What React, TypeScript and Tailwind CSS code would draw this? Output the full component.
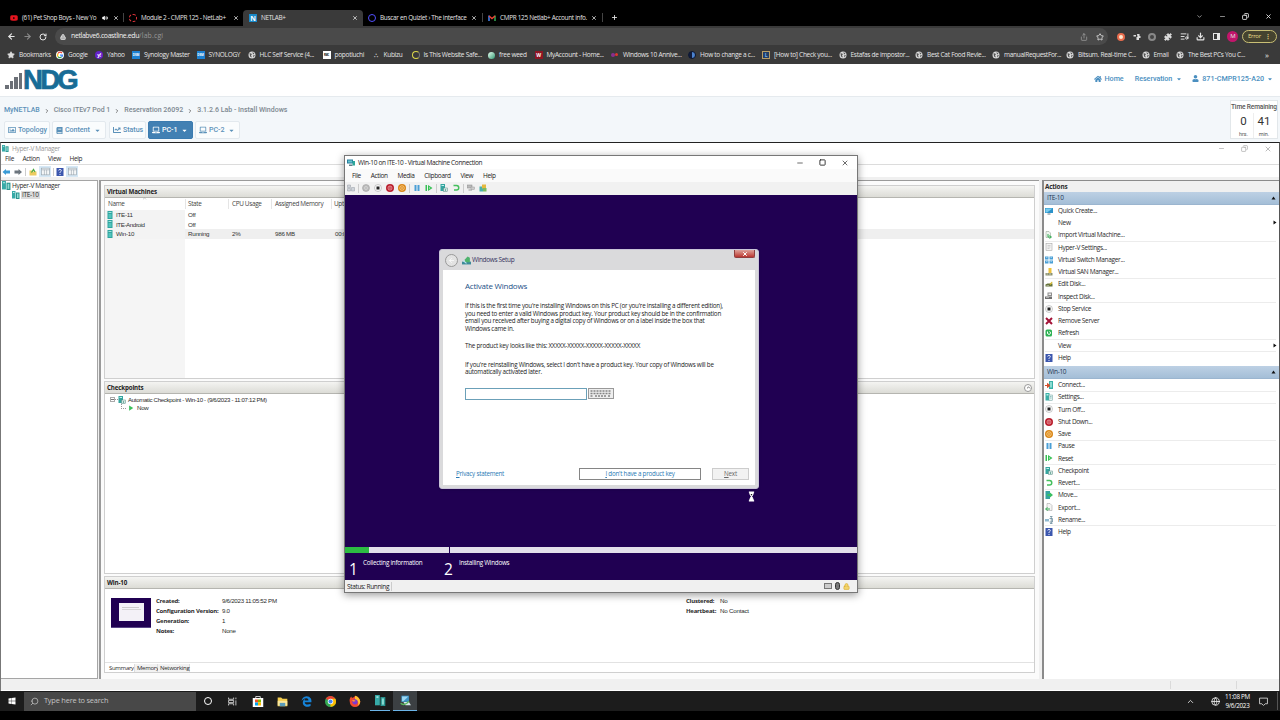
import type { ReactNode } from 'react';
import {
    ArrowLeft, ArrowRight, RotateCw, Lock, Star, Share, Puzzle, ListMusic, Download,
    ChevronDown, ChevronUp, ChevronRight, Search, Globe, Volume2, Minus, Square, X, Plus, Copy,
} from 'lucide-react';
import { FaHome, FaUser, FaCaretDown, FaBook, FaChartLine, FaLaptop, FaRegImage, FaYoutube, FaEdgeLegacy, FaWindows } from 'react-icons/fa';

const Svg = ({ children, className = 'size-2' }: { children: ReactNode; className?: string }) => (
    <svg viewBox="0 0 16 16" className={`shrink-0 ${className}`}>{children}</svg>
);

function Icon({ name, className }: { name: string; className?: string }) {
    switch (name) {
        case 'server':
            return <Svg className={className}><rect x="3" y="0" width="10" height="16" fill="#2fa5a0" /><rect x="5" y="2" width="6" height="2" fill="#a5e4df" /><rect x="5" y="6" width="6" height="8" fill="#52c4bc" /></Svg>;
        case 'servers':
            return <Svg className={className}><rect x="0" y="0" width="7" height="15" fill="#36aaa7" /><rect x="2" y="2" width="3" height="2" fill="#c3f0ec" /><rect x="8" y="3" width="7" height="13" fill="#2a9590" /><rect x="10" y="5" width="3" height="9" fill="#8adbd2" /></Svg>;
        case 'monitor':
            return <Svg className={className}><rect x="0" y="2" width="16" height="10" fill="#2b92c9" /><path d="M1 3h14L4 11H1z" fill="#79cbed" /><rect x="5" y="13" width="6" height="2" fill="#6e7d85" /></Svg>;
        case 'vmc':
            return <Svg className={className}><rect x="0" y="1" width="12" height="8" fill="#277d9d" /><rect x="2" y="3" width="8" height="4" fill="#67c4cf" /><path d="M4 11h7v3H4z" fill="#607c86" /><rect x="11" y="4" width="5" height="9" fill="#2ea79a" /></Svg>;
        case 'vmcTask':
            return <Svg className={className}><rect x="2" y="1" width="11" height="9" fill="#3f93c4" /><path d="M3 2h9L5 9H3z" fill="#9ed8f2" /><path d="M5 10h8l3 5H8z" fill="#d5e6ea" /><path d="M1 12c2 2 6 2 9 0l3-3" fill="none" stroke="#5bb85d" strokeWidth="2" /></Svg>;
        case 'import':
            return <Svg className={className}><path d="M2 1h6l3 3v9H2z" fill="#eef5ee" stroke="#8a9a8a" /><path d="M6 6v6h6M9 9l4 3-4 3" fill="none" stroke="#37ad55" strokeWidth="2" /></Svg>;
        case 'export':
            return <Svg className={className}><path d="M4 1h6l4 4v10H4z" fill="#f4f4f4" stroke="#989898" /><path d="M10 12H3M5 9l-4 3 4 3" fill="none" stroke="#37ad55" strokeWidth="2" /></Svg>;
        case 'page':
            return <Svg className={className}><rect x="2" y="1" width="12" height="14" fill="#f3f3f3" stroke="#999" /><path d="M5 5h6M5 8h6M5 11h4" stroke="#aaa" /></Svg>;
        case 'switch':
            return <Svg className={className}><path d="M0 1h7v6H0zM9 1h7v6H9zM0 9h7v6H0zM9 9h7v6H9z" fill="#4a9fd6" /><path d="M2 3h3v1H2zM11 3h3v1h-3zM2 11h3v1H2zM11 11h3v1h-3z" fill="#d8effc" /></Svg>;
        case 'san':
            return <Svg className={className}><rect x="7" y="0" width="6" height="11" fill="#efc33c" /><path d="M1 10h14v5H1z" fill="#8c9270" /><path d="M3 12h3M8 12h4" stroke="#fff" /></Svg>;
        case 'disk':
            return <Svg className={className}><path d="M1 9l4-2h10v6H1z" fill="#65733b" /><path d="M9 8l5-5 1 2-4 5z" fill="#d5b82c" /><path d="M3 11h5" stroke="#ddd" /></Svg>;
        case 'inspect':
            return <Svg className={className}><path d="M5 1h9v7H5z" fill="#8d8d8d" /><path d="M0 9h14v5H0z" fill="#707070" /><path d="M7 3h5v3H7zM2 11h6v1H2z" fill="#eee" /></Svg>;
        case 'stop':
            return <Svg className={className}><circle cx="8" cy="8" r="7" fill="#fbfbfb" stroke="#999" /><rect x="5" y="5" width="6" height="6" fill="#222" /></Svg>;
        case 'disabled':
            return <Svg className={className}><circle cx="8" cy="8" r="7" fill="#bcbcbc" stroke="#999" /><circle cx="8" cy="8" r="3" fill="none" stroke="#e5e5e5" /></Svg>;
        case 'remove':
            return <Svg className={className}><path d="M2 2l12 12M14 2L2 14" stroke="#a31237" strokeWidth="4" /></Svg>;
        case 'refresh':
            return <Svg className={className}><rect x="1" y="1" width="13" height="14" rx="3" fill="#2fb254" /><path d="M5 5v3a3 3 0 1 0 4-3" fill="none" stroke="#fff" strokeWidth="2" /></Svg>;
        case 'help':
            return <Svg className={className}><rect x="1" y="0" width="14" height="16" fill="#3c57ae" /><path d="M5.500 5a2.500 2.500 0 1 1 3.500 2.500L8 9v1M8 12v2" fill="none" stroke="#fff" strokeWidth="1.800" /></Svg>;
        case 'connect':
            return <Svg className={className}><rect x="8" y="0" width="8" height="16" fill="#39b0a7" /><rect x="10" y="2" width="4" height="11" fill="#8adbd2" /><path d="M0 9h7M5 5l5 4-5 4z" stroke="#d4512d" strokeWidth="2" fill="#d4512d" /></Svg>;
        case 'settings':
            return <Svg className={className}><rect x="1" y="0" width="8" height="15" fill="#39b0a7" /><rect x="3" y="2" width="4" height="3" fill="#b7eee8" /><rect x="8" y="4" width="7" height="11" fill="#e4f4f3" stroke="#6c9d9a" /><path d="M10 7h3M10 10h3" stroke="#44938e" /></Svg>;
        case 'shutdown':
            return <Svg className={className}><circle cx="8" cy="8" r="8" fill="#b91f2e" /><circle cx="8" cy="8" r="4" fill="none" stroke="#f3aeb0" strokeWidth="1.500" /><path d="M8 5v5" stroke="#f3c0c0" strokeWidth="1.500" /></Svg>;
        case 'save':
            return <Svg className={className}><circle cx="8" cy="8" r="8" fill="#d98518" /><circle cx="8" cy="8" r="4.500" fill="none" stroke="#ffdb95" strokeWidth="1.500" /><circle cx="8" cy="8" r="1.500" fill="#ffe4ac" /></Svg>;
        case 'pause':
            return <Svg className={className}><path d="M3 2h4v12H3zM9 2h4v12H9z" fill="#4a9fd6" /></Svg>;
        case 'reset':
            return <Svg className={className}><path d="M1 2h3v12H1zM6 2l9 6-9 6z" fill="#38bf55" /><path d="M8 6l3 2-3 2z" fill="#b5f0bd" /></Svg>;
        case 'checkpoint':
            return <Svg className={className}><rect x="1" y="0" width="9" height="14" fill="#35a59f" /><rect x="3" y="2" width="5" height="2" fill="#c3f0ec" /><rect x="7" y="8" width="8" height="7" fill="#dff1ed" stroke="#52857e" /><circle cx="11" cy="12" r="1.500" fill="#3d8a76" /></Svg>;
        case 'revert':
            return <Svg className={className}><path d="M3 3h6a4 4 0 0 1 0 9H4" fill="none" stroke="#45bf5d" strokeWidth="3" /></Svg>;
        case 'move':
            return <Svg className={className}><rect x="1" y="0" width="9" height="16" fill="#35a59f" /><path d="M5 6h5V3l6 5-6 5v-3H5z" fill="#38bf62" /></Svg>;
        case 'rename':
            return <Svg className={className}><path d="M0 6h8v5H0z" fill="#8fb9cf" /><path d="M10 1h5M12.500 1v14M10 15h5M9 5h6v7H9" fill="none" stroke="#668899" strokeWidth="1.500" /></Svg>;
        case 'folderup':
            return <Svg className={className}><path d="M1 5h5l2 2h7v8H1z" fill="#edcb60" /><path d="M5 9l4-6 3 5" fill="none" stroke="#49a944" strokeWidth="2.500" /></Svg>;
        case 'pane':
            return <Svg className={className}><rect x="1" y="2" width="14" height="12" fill="#f5f7f8" stroke="#8e9ba5" /><path d="M1 5h14M6 5v9M10 5v9" stroke="#8e9ba5" /></Svg>;
        case 'cad':
            return <Svg className={className}><path d="M1 2h6v5H1zM1 9h6v5H1zM9 7h6v7H9z" fill="#cfd4da" stroke="#969da5" /></Svg>;
        case 'enhanced':
            return <Svg className={className}><rect x="1" y="2" width="9" height="6" fill="#bbb" stroke="#888" /><rect x="8" y="6" width="7" height="5" fill="#ccc" stroke="#999" /><path d="M3 12h7" stroke="#999" strokeWidth="2" /></Svg>;
        case 'share':
            return <Svg className={className}><rect x="1" y="5" width="7" height="10" fill="#4ab0aa" /><rect x="6" y="1" width="8" height="8" fill="#e4b83f" /><rect x="8" y="8" width="7" height="7" fill="#7bba62" /></Svg>;
        case 'play':
            return <Svg className={className}><path d="M3 1l11 7-11 7z" fill="#3cc15c" /></Svg>;
        case 'setup':
            return <Svg className={className}><path d="M0 10h16v5H0z" fill="#3c8a9a" /><path d="M5 11V6l5-5 4 2v8z" fill="#4fb36d" /><path d="M2 8l6 5" stroke="#bbe3ee" strokeWidth="2" /></Svg>;
        case 'chrome':
            return (
                <Svg className={className}>
                    <circle cx="8" cy="8" r="8" fill="#34a853" />
                    <path d="M8 8L1 4a8 8 0 0 1 14 0z" fill="#ea4335" />
                    <path d="M8 8V4h7a8 8 0 0 1-7 12z" fill="#fbbc05" />
                    <circle cx="8" cy="8" r="4" fill="#fff" /><circle cx="8" cy="8" r="3" fill="#4285f4" />
                </Svg>
            );
        case 'firefox':
            return (
                <Svg className={className}>
                    <path d="M1 9C0 6 2 3 3 2l1 2c2-1 3-1 4-3 4 1 7 4 7 8a7 7 0 0 1-14 0z" fill="#f2492f" />
                    <path d="M8 1c4 1 7 4 7 8a7 7 0 0 1-4 6c3-4 1-8-3-9z" fill="#ffc02e" />
                    <circle cx="8" cy="9" r="3.500" fill="#7a3ad0" /><path d="M4 7c2-1 4 0 5 1L6 9z" fill="#ff9130" />
                </Svg>
            );
        case 'google':
            return (
                <Svg className={className}>
                    <circle cx="8" cy="8" r="8" fill="#fff" />
                    <g fill="none" strokeWidth="2.500"><path d="M4 5a5 5 0 0 1 8-1" stroke="#ea4335" /><path d="M4 5a5 5 0 0 0 0 6" stroke="#fbbc05" /><path d="M4 11a5 5 0 0 0 7 1" stroke="#34a853" /><path d="M8 8h5a5 5 0 0 1-2 4" stroke="#4285f4" /></g>
                </Svg>
            );
        case 'world':
            return <Svg className={className}><circle cx="8" cy="8" r="7" fill="#dadada" /><path d="M3 4l5 2-2 3 2 4-4-2zM9 2l4 3-3 2zM10 9l4-1-3 5z" fill="#555" /></Svg>;
        default:
            return <Svg className={className}>{null}</Svg>;
    }
}

const Letter = ({ children, className }: { children?: ReactNode; className: string }) => (
    <span className={`flex size-2 shrink-0 items-center justify-center leading-none font-bold ${className}`}>{children}</span>
);

type Bookmark = { icon: ReactNode; label: string; width: number };

const world = <Icon name="world" className="size-2" />;
const dsm = <Letter className="bg-[#1d81d2] text-[3px] tracking-[-0.1px] text-white">DSM</Letter>;

const bookmarks: Bookmark[] = [
    { icon: <Star className="size-2 shrink-0 fill-[#ddd] stroke-[#ddd]" />, label: 'Bookmarks', width: 49 },
    { icon: <Icon name="google" />, label: 'Google', width: 39 },
    { icon: <Letter className="rounded-sm bg-[#6420c8] text-[5px] text-white">y!</Letter>, label: 'Yahoo', width: 37 },
    { icon: dsm, label: 'Synology Master', width: 64.5 },
    { icon: dsm, label: 'SYNOLOGY', width: 51 },
    { icon: world, label: 'HLC Self Service (4...', width: 75 },
    { icon: <Letter className="bg-white text-[2.500px] text-black">RMC</Letter>, label: 'popotluchi', width: 49 },
    { icon: <Letter className="text-[6px] text-[#bbb]">⛬</Letter>, label: 'Kubizu', width: 40 },
    { icon: <span className="size-2 shrink-0 rounded-full border-[1.500px] border-[#dcd84a] border-r-[#777]" />, label: 'Is This Website Safe...', width: 76.5 },
    { icon: <span className="size-[7px] shrink-0 rounded-full bg-linear-to-br from-[#e6fff2] to-[#1f9a75]" />, label: 'free weed', width: 46.5 },
    { icon: <Letter className="bg-[#8f1523] text-[5px] text-white">W</Letter>, label: 'MyAccount - Home...', width: 76.5 },
    { icon: <span className="flex w-2 shrink-0"><i className="size-1 rounded-full bg-[#8b2f8e]" /><i className="size-[3px] rounded-full bg-[#e0352e]" /></span>, label: 'Windows 10 Annive...', width: 77 },
    { icon: <span className="size-2 shrink-0 rounded-full border border-[#0c1734] bg-linear-to-r from-[#111c3c] from-50% to-[#4c83cf] to-50%" />, label: 'How to change a c...', width: 74 },
    { icon: <Letter className="border border-[#b99e66] bg-[#213e66] text-[5px] text-[#7fb4ea]">L</Letter>, label: '[How to] Check you...', width: 76.5 },
    { icon: world, label: 'Estafas de impostor...', width: 76.5 },
    { icon: world, label: 'Best Cat Food Revie...', width: 77 },
    { icon: world, label: 'manualRequestFor...', width: 74 },
    { icon: world, label: 'Bitsum. Real-time C...', width: 75.5 },
    { icon: world, label: 'Email', width: 34.5 },
    { icon: world, label: 'The Best PCs You C...', width: 89 },
];

function BrowserTab({ icon, label, className = '', labelClass = '', sound = false }: { icon: ReactNode; label: string; className?: string; labelClass?: string; sound?: boolean }) {
    return (
        <div className={`flex h-4 items-center text-[6.400px] text-[#e4e4e4] ${className}`}>
            {icon}
            <span className={`ml-1 ${labelClass}`}>{label}</span>
            {sound && <Volume2 className="ml-auto size-1.5 shrink-0 fill-white stroke-white" />}
            <X className={`${sound ? 'ml-[5px]' : 'ml-auto'} size-[6px] shrink-0`} strokeWidth={3} />
        </div>
    );
}

const BrowserChrome = () => (
    <header className="text-[6.500px] text-[#e6e6e6]">
        <div className="flex h-[26px] items-end bg-black">
            <BrowserTab className="w-[119px] pl-[10px]" labelClass="tracking-[-0.32px]" icon={<FaYoutube className="size-2 shrink-0 text-[#e6151f]" />} label="(61) Pet Shop Boys - New Yo" sound />
            <span className="mb-[4px] ml-[4px] h-[9px] w-px bg-[#444]" />
            <BrowserTab className="w-[115px] pl-[5px]" labelClass="tracking-[-0.32px]" icon={<span className="size-2 shrink-0 rounded-full border border-dashed border-[#e6343b]" />} label="Module 2 - CMPR 125 - NetLab+" />
            <BrowserTab className="ml-[4px] w-[120px] rounded-t bg-[#3a3a3a] pr-[5px] pl-[6px]" icon={<Letter className="bg-[#1989c8] text-[7px] text-white">N</Letter>} label="NETLAB+" labelClass="tracking-[-0.35px]" />
            <BrowserTab className="w-[114px] pl-[5px]" labelClass="tracking-[-0.3px]" icon={<span className="size-2 shrink-0 rounded-full border-[1.500px] border-[#5250ff]" />} label="Buscar en Quizlet › The interface" />
            <span className="mb-[4px] ml-[5px] h-[9px] w-px bg-[#444]" />
            <BrowserTab
                className="w-[114px] pl-[5px]"
                labelClass="tracking-[-0.300px]"
                icon={<Svg><path d="M2 14V3" stroke="#4285f4" strokeWidth="3" /><path d="M14 14V3" stroke="#34a853" strokeWidth="3" /><path d="M2 4l6 5 6-5" fill="none" stroke="#ea4335" strokeWidth="3" /></Svg>}
                label="CMPR 125 Netlab+ Account info."
            />
            <span className="mb-[4px] ml-[5px] h-[9px] w-px bg-[#444]" />
            <Plus className="mb-[5px] ml-[8px] size-[7px]" strokeWidth={3} />
            <div className="mb-[6px] ml-auto flex items-center gap-[16px] pr-[8px]">
                <ChevronDown className="size-[7px]" />
                <Minus className="size-[7px]" />
                <Copy className="size-[7px] -scale-x-100" strokeWidth={3} />
                <X className="size-[7px]" strokeWidth={3} />
            </div>
        </div>
        <div className="flex h-[20px] items-center bg-[#3a3a3a] pt-px pl-[7px]">
            <ArrowLeft className="size-[9px]" strokeWidth={3} />
            <ArrowRight className="ml-[7px] size-[9px] text-[#888]" strokeWidth={3} />
            <RotateCw className="ml-[7px] size-[8px]" strokeWidth={3} />
            <div className="ml-[8px] flex h-[17px] w-[1053px] items-center rounded-full bg-[#4a4a4a] pr-[4px] pl-[5px]">
                <Lock className="size-[6px] fill-[#aaa]" strokeWidth={3} />
                <span className="ml-[5px] text-[6.900px] tracking-[-0.35px] text-[#f2f2f2]">netlabve6.coastline.edu<span className="tracking-[0.15px] text-[#999]">/lab.cgi</span></span>
                <Share className="ml-auto size-[8px] text-[#aaa]" />
                <Star className="ml-[8px] size-[8px]" strokeWidth={2.5} />
            </div>
            <div className="flex flex-1 items-center justify-end gap-[7.600px] pr-[3px]">
                <span className="size-2 rounded-full border-2 border-[#e86c4d] bg-[#ffe9d0]" />
                <Svg><path d="M1 4h5v3H1zM8 2h5v4h2v4h-3v4H7V8h2z" fill="#ddd" /></Svg>
                <span className="size-2 rounded-full border-2 border-double border-[#888] bg-[#444]" />
                <Puzzle className="size-[8px] fill-[#ddd]" />
                <ListMusic className="size-[9px]" strokeWidth={2.5} />
                <Download className="size-[9px]" strokeWidth={3} />
                <span className="size-[7px] border border-r-[3px] border-[#e6e6e6]" />
                <span className="flex size-[11px] items-center justify-center rounded-full bg-[#c2156b] text-[6px]">M</span>
                <span className="-ml-1 flex h-[13px] w-[35px] items-center justify-between rounded-full border border-[#c9bf75] bg-[#45432f] px-[5px] text-[6px] tracking-[-0.3px] text-[#e8dd8a]">Error<b>⋮</b></span>
            </div>
        </div>
        <div className="flex h-[18px] items-center bg-[#3a3a3a] pl-[7px]">
            {bookmarks.map((b) => (
                <div key={b.label} className="flex shrink-0 items-center gap-1 tracking-[-0.28px]" style={{ width: b.width }}>
                    {b.icon}
                    <span>{b.label}</span>
                </div>
            ))}
            <span className="text-[8px]">»</span>
        </div>
    </header>
);

const PageButton = ({ icon, label, caret = false, active = false, className = '' }: { icon: ReactNode; label: string; caret?: boolean; active?: boolean; className?: string }) => (
    <div className={`flex h-[18px] items-center rounded-xs border pl-[3px] text-[7.100px] font-medium tracking-[-0.05px] [&>svg]:shrink-0 ${active ? 'border-[#3b7bb0] bg-[#4280b3] text-white' : 'border-[#e3e9ee] bg-[#fafcfd] text-[#5b91b9]'} ${className}`}>
        {icon}
        <span className="ml-[2px]">{label}</span>
        {caret && <FaCaretDown className="mr-[4px] ml-auto size-[7px]" />}
    </div>
);

const crumb = <ChevronRight className="mx-[4px] size-[6px] text-[#555]" strokeWidth={3} />;

const LabHeader = () => (
    <section className="font-[Roboto,sans-serif]">
        <div className="flex h-[32px] items-center bg-white pr-[7px] pl-[5px]">
            <div className="mb-[1.500px] flex items-end gap-[1px]">
                <i className="h-[4px] w-[3.500px] bg-[#6c7077]" />
                <i className="h-[8px] w-[3.500px] bg-[#6c7077]" />
                <i className="h-[12px] w-[3.500px] bg-[#6c7077]" />
                <i className="h-[16px] w-[3.500px] bg-[#6c7077]" />
                <b className="h-[20px] w-[55px] font-['Liberation_Sans',sans-serif] text-[27.500px] leading-[21px] tracking-[-2.700px] text-[#186c96] [-webkit-text-stroke:0.7px_#186c96]">NDG</b>
            </div>
            <nav className="mb-[2px] ml-auto flex items-center text-[7.200px] font-medium tracking-[-0.05px] text-[#4b8fc0]">
                <FaHome className="mr-[3px] size-[8px]" />Home
                <span className="ml-[11px]">Reservation</span><FaCaretDown className="ml-[4px] size-[6px]" />
                <FaUser className="mr-[3px] ml-[10px] size-[7px]" />871-CMPR125-A20<FaCaretDown className="ml-[3px] size-[6px]" />
            </nav>
        </div>
        <div className="flex h-[46px] justify-between border-t border-[#e5eaee] bg-[#f3f7fa]">
            <div>
                <div className="mt-[8px] flex h-[11px] items-center pl-[4px] text-[7px] font-medium text-[#7d8891]">
                    <span className="text-[#5b91b9]">MyNETLAB</span>{crumb}
                    <span>Cisco ITEv7 Pod 1</span>{crumb}
                    <span>Reservation 26092</span>{crumb}
                    <span>3.1.2.6 Lab - Install Windows</span>
                </div>
                <div className="mt-[5px] flex pl-[4px]">
                    <PageButton className="w-[46px]" icon={<FaRegImage className="size-[8px]" />} label="Topology" />
                    <PageButton className="ml-[2px] w-[54px]" icon={<FaBook className="size-[7px]" />} label="Content" caret />
                    <PageButton className="ml-[3px] w-[37px]" icon={<FaChartLine className="size-[8px]" />} label="Status" />
                    <PageButton className="ml-[2px] w-[45px]" icon={<FaLaptop className="size-[8px]" />} label="PC-1" caret active />
                    <PageButton className="ml-[2px] w-[45px]" icon={<FaLaptop className="size-[8px]" />} label="PC-2" caret />
                </div>
            </div>
            <div className="mt-[3px] mr-[2px] h-[39px] w-[48px] border border-[#e2e7ea] bg-white text-[#555]">
                <div className="h-[12px] text-[6.600px] leading-[12px] font-medium tracking-[-0.15px]">Time Remaining</div>
                <div className="flex text-center">
                    <div className="w-[23px] border-r border-[#eee] pl-[3px]"><div className="text-[11.500px] leading-[17px] text-[#333]">0</div><div className="text-[5.500px] leading-[8px]">hrs.</div></div>
                    <div className="w-[20px]"><div className="text-[11.500px] leading-[17px] text-[#333]">41</div><div className="text-[5.500px] leading-[8px]">min.</div></div>
                </div>
            </div>
        </div>
    </section>
);

const PanelTitle = ({ children }: { children: ReactNode }) => (
    <div className="flex h-[12px] shrink-0 items-center justify-between border-b border-[#b5b5b0] bg-linear-to-b from-[#f4f4f2] to-[#dcdcd6] px-[2px] text-[6.200px] font-bold tracking-[-0.15px] text-[#222]">{children}</div>
);

const machines = [
    { name: 'ITE-11', state: 'Off', cpu: '', memory: '', uptime: '' },
    { name: 'ITE-Android', state: 'Off', cpu: '', memory: '', uptime: '' },
    { name: 'Win-10', state: 'Running', cpu: '2%', memory: '986 MB', uptime: '00:01' },
];

const details = [
    ['Created:', '9/6/2023 11:05:52 PM'],
    ['Configuration Version:', '9.0'],
    ['Generation:', '1'],
    ['Notes:', 'None'],
];

type Action = { icon: string; label: string; line?: boolean; more?: boolean };

const hostActions: Action[] = [
    { icon: 'monitor', label: 'Quick Create...' },
    { icon: '', label: 'New', more: true },
    { icon: 'import', label: 'Import Virtual Machine...', line: true },
    { icon: 'page', label: 'Hyper-V Settings...' },
    { icon: 'switch', label: 'Virtual Switch Manager...' },
    { icon: 'san', label: 'Virtual SAN Manager...', line: true },
    { icon: 'disk', label: 'Edit Disk...' },
    { icon: 'inspect', label: 'Inspect Disk...', line: true },
    { icon: 'stop', label: 'Stop Service' },
    { icon: 'remove', label: 'Remove Server' },
    { icon: 'refresh', label: 'Refresh', line: true },
    { icon: '', label: 'View', more: true, line: true },
    { icon: 'help', label: 'Help' },
];

const vmActions: Action[] = [
    { icon: 'connect', label: 'Connect...', line: true },
    { icon: 'settings', label: 'Settings...', line: true },
    { icon: 'stop', label: 'Turn Off...' },
    { icon: 'shutdown', label: 'Shut Down...' },
    { icon: 'save', label: 'Save', line: true },
    { icon: 'pause', label: 'Pause' },
    { icon: 'reset', label: 'Reset', line: true },
    { icon: 'checkpoint', label: 'Checkpoint' },
    { icon: 'revert', label: 'Revert...', line: true },
    { icon: 'move', label: 'Move...' },
    { icon: 'export', label: 'Export...' },
    { icon: 'rename', label: 'Rename...', line: true },
    { icon: 'help', label: 'Help' },
];

function ActionGroup({ title, actions }: { title: string; actions: Action[] }) {
    return (
        <div>
            <div className="flex h-[13px] items-center justify-between border-b border-[#9bb5cf] bg-linear-to-b from-[#bdd0e4] to-[#a4bed7] px-[3px] text-[#1f3652]">
                {title}
                <Svg className="h-[4px] w-[5px]"><path d="M0 14L8 2l8 12z" fill="#111" /></Svg>
            </div>
            {actions.map((a) => (
                <div key={a.label} className={`mr-[3px] ml-[1px] flex h-[12.250px] items-center border-b ${a.line ? 'border-[#ececec]' : 'border-transparent'}`}>
                    <Icon name={a.icon} className="size-2" />
                    <span className="ml-[5px]">{a.label}</span>
                    {a.more && <Svg className="-mr-px ml-auto h-[5px] w-[4px]"><path d="M2 0l12 8-12 8z" fill="#111" /></Svg>}
                </div>
            ))}
        </div>
    );
}

const Center = () => (
    <div className="flex w-[940px] flex-col border-t border-l-2 border-[#9a9a9a] bg-[#fbfbfb] pt-[4px] pr-[4px] pl-[3px]">
        <div className="h-[194px] border border-[#cfcfcf] bg-white">
            <PanelTitle>Virtual Machines</PanelTitle>
            <div className="flex h-[12px] items-center pl-[3px] text-[6.400px] text-[#444]">
                <span className="relative w-[77px]">Name<ChevronUp className="absolute -top-[3px] left-[34px] size-[5px] text-[#888]" /></span>
                <span className="w-[43px] border-l border-[#e5e5e5] pl-[2px]">State</span>
                <span className="w-[43px] border-l border-[#e5e5e5] pl-[3px]">CPU Usage</span>
                <span className="w-[60px] border-l border-[#e5e5e5] pl-[3px]">Assigned Memory</span>
                <span className="border-l border-[#e5e5e5] pl-[2px]">Uptime</span>
            </div>
            {machines.map((m) => (
                <div key={m.name} className={`flex h-[9.600px] items-center font-['Liberation_Sans',sans-serif] text-[6.200px] tracking-[-0.25px] text-[#333] ${m.name === 'Win-10' ? 'bg-[#efefef]' : ''}`}>
                    <span className="flex h-full w-[80px] items-center bg-[#f3f3f3]"><Icon name="server" className="ml-px size-[8px]" /><span className={m.name === 'ITE-Android' ? 'ml-[2px] tracking-[-0.4px]' : 'ml-[2px]'}>{m.name}</span></span>
                    <span className="w-[44px] pl-[3px]">{m.state}</span>
                    <span className="w-[43px] pl-[3px]">{m.cpu}</span>
                    <span className="w-[60px] pl-[3px]">{m.memory}</span>
                    <span className="pl-[3px]">{m.uptime}</span>
                </div>
            ))}
            <div className="h-[139px] w-[80px] bg-[#f5f5f5]" />
        </div>
        <div className="mt-[2px] h-[193px] border border-[#cfcfcf] bg-white">
            <PanelTitle>Checkpoints<span className="flex size-[8px] items-center justify-center rounded-full border border-[#999] bg-white"><ChevronUp className="size-[5px]" strokeWidth={3} /></span></PanelTitle>
            <div className="mt-[1px] flex h-[9px] items-center pl-[5px] font-['Liberation_Sans',sans-serif] text-[6.100px] tracking-[-0.320px]">
                <span className="flex size-[5px] items-center justify-center border border-[#aaa]"><i className="h-px w-[3px] bg-[#777]" /></span>
                <i className="w-[3px] border-b border-dotted border-[#999]" />
                <Icon name="checkpoint" className="size-[8px]" />
                <span className="ml-[2px]">Automatic Checkpoint - Win-10 - (9/6/2023 - 11:07:12 PM)</span>
            </div>
            <div className="flex h-[8px] items-center pl-[16px] font-['Liberation_Sans',sans-serif] text-[6.200px]">
                <i className="mb-[3px] h-[5px] w-[5px] border-b border-l border-dotted border-[#999]" />
                <Icon name="play" className="ml-[2px] size-[6px]" />
                <span className="ml-[3px]">Now</span>
            </div>
        </div>
        <div className="mt-[2px] flex h-[97px] flex-col border border-[#cfcfcf] bg-white">
            <PanelTitle>Win-10</PanelTitle>
            <div className="flex flex-1 pt-[7px] pl-[6px] text-[6.200px] leading-[10px]">
                <div className="mt-[2px] flex h-[30px] w-[40px] flex-col items-center border-b border-[#5a4687] bg-[#200052] pt-[5px]">
                    <div className="h-[18px] w-[25px] bg-[#f3f1f7] pt-[4px] pl-[3px]"><i className="block h-px w-[17px] bg-[#ccc]" /><i className="mt-px block h-px w-[19px] bg-[#d5d5d5]" /></div>
                </div>
                <div className="ml-[5px] w-[530px]">
                    {details.map(([label, value]) => (
                        <div key={label} className="flex h-[10.100px]">
                            <b className="w-[66px] text-[6px] tracking-[-0.22px]">{label}</b>
                            <span className="font-['Liberation_Sans',sans-serif] tracking-[-0.28px]">{value}</span>
                        </div>
                    ))}
                </div>
                <div className="tracking-[-0.22px]">
                    <div className="flex"><b className="w-[34px] text-[6px]">Clustered:</b><span className="font-['Liberation_Sans',sans-serif]">No</span></div>
                    <div className="flex"><b className="w-[34px] text-[6px]">Heartbeat:</b><span className="font-['Liberation_Sans',sans-serif]">No Contact</span></div>
                </div>
            </div>
            <div className="flex h-[10px] items-center border-t border-[#e2e2e2] text-[6px] tracking-[-0.3px]">
                <span className="w-[29px] pt-px pl-[4px] leading-[9px]">Summary</span>
                <span className="h-[8px] w-[24px] border-x border-[#ddd] bg-[#f2f2f2] pl-[2px] leading-[8px]">Memory</span>
                <span className="h-[8px] w-[32px] border-r border-[#ddd] bg-[#f2f2f2] pl-[2px] leading-[8px]">Networking</span>
            </div>
        </div>
    </div>
);

const HyperVManager = () => (
    <main className="flex h-[549px] flex-col border-t-[1.500px] border-r border-l border-t-[#222] border-r-[#555] border-l-[#777] bg-white text-[6.500px] tracking-[-0.33px] text-[#2b2b2b]">
        <div className="flex h-[10px] items-center pt-px pl-[1px] text-[6.500px] text-[#999]">
            <Icon name="servers" className="mr-[3px] size-[7px]" />Hyper-V Manager
            <div className="ml-auto flex items-center gap-[16px] pr-[7px] text-[#999]">
                <Minus className="size-[7px]" /><Copy className="size-[7px] -scale-x-100" /><X className="size-[8px]" />
            </div>
        </div>
        <div className="flex h-[12px] items-center gap-[8.500px] border-b border-[#dcdcdc] pt-px pl-[4px]"><span>File</span><span>Action</span><span>View</span><span>Help</span></div>
        <div className="flex h-[12px] items-center pt-px pl-[1px]">
            <Svg className="h-[8px] w-[9px]"><path d="M0 8l7-6v3h8v6H7v3z" fill="#3a9bd6" /></Svg>
            <Svg className="ml-[3px] h-[8px] w-[8px]"><path d="M16 8L9 2v3H1v6h8v3z" fill="#6c757d" /></Svg>
            <i className="mx-[3px] h-[8px] w-px bg-[#ccc]" />
            <Icon name="folderup" className="size-[8px]" />
            <span className="mx-[2px] flex h-[11px] w-[12px] items-center justify-center bg-[#d6e8f5]"><Icon name="pane" className="size-[9px]" /></span>
            <i className="mr-[2px] h-[8px] w-px bg-[#ccc]" />
            <Icon name="help" className="size-[8px]" />
            <span className="ml-[2px] flex h-[11px] w-[12px] items-center justify-center bg-[#d6e8f5]"><Icon name="pane" className="size-[9px]" /></span>
        </div>
        <div className="flex flex-1 bg-[#f0f0f0] pt-[3px]">
            <div className="w-[97px] border-t border-r border-b border-[#a5a5a5] bg-white pl-[1px]">
                <div className="flex h-[9px] items-center"><Icon name="servers" className="mr-[1px] size-[9px]" />Hyper-V Manager</div>
                <div className="flex h-[9px] items-center pl-[10px]"><Icon name="servers" className="size-[8px]" /><span className="ml-px bg-[#dcdcdc] px-px leading-[8px]">ITE-10</span></div>
            </div>
            <div className="w-[1px]" />
            <Center />
            <div className="w-[3px]" />
            <div className="flex-1 border-t border-l-2 border-[#8b8b8b] bg-white">
                <div className="h-[11px] bg-[#f0f0f0] pl-[1px] text-[6.400px] leading-[11px] font-bold tracking-[-0.2px]">Actions</div>
                <ActionGroup title="ITE-10" actions={hostActions} />
                <div className="h-[2px]" />
                <ActionGroup title="Win-10" actions={vmActions} />
            </div>
        </div>
        <div className="flex h-[12.500px] justify-end border-b border-white bg-[#f0f0f0]"><i className="mt-[2px] h-[8px] w-[67px] border-x border-[#dadada]" /><i className="w-[42px]" /></div>
    </main>
);

const ProductKeyDialog = () => (
    <div className="absolute top-[93px] left-[94px] h-[240px] w-[320px] rounded-[3px] border border-[#c9c4d8] bg-[#dadadc] px-[3px] text-[6.250px] tracking-[-0.230px] text-[#222] shadow">
        <div className="flex h-[20px] items-center pl-[2px]">
            <span className="flex size-[13px] items-center justify-center rounded-full border border-[#999] bg-[#e2e2e2]"><ArrowLeft className="size-[7px] text-[#f8f8f8]" strokeWidth={3} /></span>
            <Icon name="setup" className="ml-[4px] size-[9px]" />
            <span className="ml-[1px] text-[6.500px] tracking-[-0.35px] text-[#35355c]">Windows Setup</span>
            <span className="mb-auto ml-auto flex h-[8px] w-[21px] items-center justify-center rounded-b-xs border border-t-0 border-[#8f3f3f] bg-linear-to-b from-[#dda19b] to-[#b93330]"><X className="size-[6px] text-white" strokeWidth={4} /></span>
        </div>
        <div className="flex h-[215px] flex-col bg-white pb-[5px] pl-px leading-[7.500px]">
            <h1 className="mt-[10px] ml-[21px] text-[8px] leading-[11px] text-[#245087]">Activate Windows</h1>
            <p className="mt-[11px] ml-[21px]">
                If this is the first time you're installing Windows on this PC (or you're installing a different edition),<br />
                you need to enter a valid Windows product key. Your product key should be in the confirmation<br />
                email you received after buying a digital copy of Windows or on a label inside the box that<br />
                Windows came in.
            </p>
            <p className="mt-[10px] ml-[21px]">The product key looks like this: XXXXX-XXXXX-XXXXX-XXXXX-XXXXX</p>
            <p className="mt-[11px] ml-[21px]">
                If you're reinstalling Windows, select I don't have a product key. Your copy of Windows will be<br />
                automatically activated later.
            </p>
            <div className="mt-[12px] ml-[21px] flex items-center">
                <span className="h-[12px] w-[122px] border border-[#6ba0b8]" />
                <svg viewBox="0 0 26 11" className="ml-[1px] h-[11px] w-[26px]">
                    <rect x="0.500" y="0.500" width="25" height="10" fill="#eee" stroke="#999" />
                    <path d="M2.500 3h21M2.500 5.500h21M2.500 8h3M7 8h12M20 8h3" stroke="#858585" strokeWidth="1.500" strokeDasharray="2 1" />
                </svg>
            </div>
            <div className="mt-auto flex h-[13px] items-center pr-[6px] pl-[12px]">
                <span className="text-[#2878b4]"><u>P</u>rivacy statement</span>
                <span className="ml-auto flex h-[12px] w-[122px] items-center justify-center border border-[#858585] text-[#2878b4]"><span><u>I</u> don't have a product key</span></span>
                <span className="ml-[11px] flex h-[12px] w-[37px] items-center justify-center border border-[#ccc] bg-[#f2f2f2] text-[#666]"><span><u>N</u>ext</span></span>
            </div>
        </div>
    </div>
);

const VmConnection = () => (
    <div className="absolute top-[155px] left-[344px] flex h-[438px] w-[514px] flex-col border border-[#777] bg-white text-[6.500px] tracking-[-0.350px] text-[#222] shadow-[0_2px_8px_rgba(0,0,0,0.4)]">
        <div className="flex h-[13px] items-center pl-[2px] text-[6.500px]">
            <Icon name="vmc" className="mr-[3px] size-[8px]" />Win-10 on ITE-10 - Virtual Machine Connection
            <div className="ml-auto flex items-center gap-[15px] pr-[8px]"><Minus className="size-[8px]" /><Square className="size-[7px]" strokeWidth={3} /><X className="size-[8px]" /></div>
        </div>
        <div className="flex h-[13px] items-center gap-[9.800px] bg-[#fafafa] pl-[7px]"><span>File</span><span>Action</span><span>Media</span><span>Clipboard</span><span>View</span><span>Help</span></div>
        <div className="flex h-[13px] items-center bg-[#f1f1f1] pb-px pl-[2px]">
            <Icon name="cad" className="size-[8px]" />
            <i className="mr-[3px] ml-[3px] h-[9px] w-px bg-[#ccc]" />
            <Icon name="disabled" className="size-[8px]" />
            <Icon name="stop" className="ml-[4px] size-[8px]" />
            <Icon name="shutdown" className="ml-[4px] size-[8px]" />
            <Icon name="save" className="ml-[4px] size-[8px]" />
            <i className="mx-[3px] h-[9px] w-px bg-[#ccc]" />
            <Icon name="pause" className="size-[8px]" />
            <Icon name="reset" className="ml-[4px] size-[8px]" />
            <i className="mx-[3px] h-[9px] w-px bg-[#ccc]" />
            <Icon name="checkpoint" className="size-[8px]" />
            <Icon name="revert" className="ml-[4px] size-[8px]" />
            <i className="mx-[3px] h-[9px] w-px bg-[#ccc]" />
            <Icon name="enhanced" className="size-[8px]" />
            <Icon name="share" className="ml-[4px] size-[8px]" />
        </div>
        <div className="flex flex-1 flex-col justify-end bg-[#200052] text-white">
            <div className="flex h-[6px] bg-[#e3dfea]"><i className="w-[24px] bg-[#2dbb43]" /><i className="ml-[80px] w-[1px] bg-[#200052]" /></div>
            <div className="flex h-[27px] pt-[5px] pl-[4px] text-[6.300px] leading-[9px] tracking-[-0.25px]">
                <span className="w-[14px] pt-[2px] text-[15.500px] leading-[18px]">1</span><span className="w-[81px]">Collecting information</span>
                <span className="w-[15px] pt-[2px] text-[15.500px] leading-[18px]">2</span><span>Installing Windows</span>
            </div>
        </div>
        <div className="flex h-[12px] items-center bg-[#f0f0f0] pl-[2px]">
            <span className="border-r border-[#ccc] pr-[2px] leading-[9px]">Status: Running</span>
            <span className="ml-auto h-[6px] w-[8px] border border-[#777] bg-[#ccc]" />
            <span className="ml-[3px] h-[8px] w-[5px] rounded-full border border-[#333] bg-[#777]" />
            <Lock className="mr-[7px] ml-[3px] size-[7px] fill-[#f2d56f] text-[#dba823]" />
        </div>
        <ProductKeyDialog />
        <svg viewBox="0 0 8 12" className="absolute top-[335px] left-[403px] h-[11px] w-[7px]">
            <path d="M1 1h6M1 11h6M2 2c0 3 4 5 4 8H2c0-3 4-5 4-8z" fill="#fff" stroke="#fff" strokeWidth="1.200" /><path d="M3 3h2L4 5z" fill="#111" />
        </svg>
    </div>
);

const Taskbar = () => (
    <footer className="flex h-[20px] items-center bg-[#1c1c1c] text-white">
        <FaWindows className="ml-[8px] size-[8px]" />
        <div className="ml-[8px] flex h-[19px] w-[172px] items-center bg-[#484848] pl-[6px] text-[7.400px] tracking-[-0.2px] text-[#c4c4c4]"><Search className="mr-[5px] size-[9px] -scale-x-100" />Type here to search</div>
        <span className="ml-[8px] size-[8px] rounded-full border-[1.500px] border-white" />
        <Svg className="ml-[16px] size-[9px]"><path d="M1 1v3h9V1M1 15v-3h9v3M1 6h9v4H1zM14 1v3M14 6v9" fill="none" stroke="#ddd" strokeWidth="1.500" /></Svg>
        <Svg className="ml-[15px] size-[12px]"><path d="M5 5V2h6v3" fill="none" stroke="#fff" /><path d="M1 4h14v12H1z" fill="#fff" /><path d="M4 6h4v4H4z" fill="#f25022" /><path d="M8 6h4v4H8z" fill="#7fba00" /><path d="M4 10h4v4H4z" fill="#00a4ef" /><path d="M8 10h4v4H8z" fill="#ffb900" /></Svg>
        <Svg className="ml-[13px] size-[11px]"><path d="M1 2h5l2 2h7v11H1z" fill="#f5cd4e" /><path d="M1 7h14v7H1z" fill="#fae69a" /><path d="M4 10h8v5H4z" fill="#5a9cba" /></Svg>
        <FaEdgeLegacy className="ml-[13px] size-[11px] text-[#1684d9]" />
        <Icon name="chrome" className="ml-[13px] size-[11px]" />
        <Icon name="firefox" className="ml-[13px] size-[12px]" />
        <span className="ml-[9px] flex h-full w-[20px] items-center justify-center border-b border-[#6bb4e8]"><Icon name="servers" className="size-[11px]" /></span>
        <span className="ml-[3px] flex h-full w-[24px] items-center justify-center border-b border-[#6bb4e8] bg-[#3c4043]"><Icon name="vmcTask" className="size-[11px]" /></span>
        <ChevronUp className="ml-auto size-[9px]" />
        <Globe className="ml-[16px] size-[9px]" />
        <div className="ml-[5px] w-[25px] text-center text-[6.300px] leading-[9px] tracking-[-0.28px]">11:08 PM<br />9/6/2023</div>
        <Svg className="ml-[9px] size-[9px]"><path d="M1 2h14v10h-4l-3 3-3-3H1z" fill="none" stroke="#ddd" strokeWidth="1.500" /></Svg>
        <i className="ml-[9px] h-[18px] w-px bg-[#555]" />
        <i className="w-[2px]" />
    </footer>
);

export default function App() {
    return (
        <div className="relative h-[720px] w-[1280px] overflow-hidden bg-black font-['Open_Sans','Liberation_Sans',sans-serif] whitespace-nowrap">
            <BrowserChrome />
            <LabHeader />
            <HyperVManager />
            <Taskbar />
            <VmConnection />
        </div>
    );
}
